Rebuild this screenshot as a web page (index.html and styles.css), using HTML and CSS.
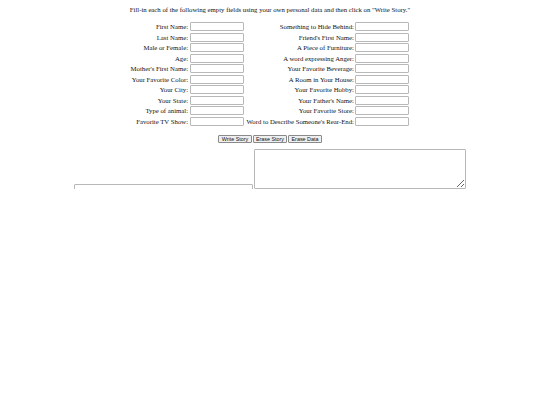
FILE: index.html
```html
<!DOCTYPE html>
<html>
<head>
<meta charset="utf-8">
<link rel="stylesheet" href="styles.css">
</head>
<body>
<p class="intro">Fill-in each of the following empty fields using your own personal data and then click on "Write Story."</p>
<div class="form">
  <label>First Name:</label><input class="field"><label>Something to Hide Behind:</label><input class="field">
  <label>Last Name:</label><input class="field"><label>Friend's First Name:</label><input class="field">
  <label>Male or Female:</label><input class="field"><label>A Piece of Furniture:</label><input class="field">
  <label>Age:</label><input class="field"><label>A word expressing Anger:</label><input class="field">
  <label>Mother's First Name:</label><input class="field"><label>Your Favorite Beverage:</label><input class="field">
  <label>Your Favorite Color:</label><input class="field"><label>A Room in Your House:</label><input class="field">
  <label>Your City:</label><input class="field"><label>Your Favorite Hobby:</label><input class="field">
  <label>Your State:</label><input class="field"><label>Your Father's Name:</label><input class="field">
  <label>Type of animal:</label><input class="field"><label>Your Favorite Store:</label><input class="field">
  <label>Favorite TV Show:</label><input class="field"><label>Word to Describe Someone's Rear-End:</label><input class="field">
</div>
<div class="buttons">
  <button class="btn">Write Story</button><button class="btn">Erase Story</button><button class="btn">Erase Data</button>
</div>
<div class="output">
  <input class="title-field"><textarea class="story"></textarea>
</div>
</body>
</html>
```
FILE: styles.css
```css
html, body {
  margin: 0;
  padding: 0;
  background: #fff;
}
body {
  font-family: "Liberation Serif", "Times New Roman", serif;
  font-size: 6.75px;
  color: #111;
}
.intro {
  margin: 0;
  padding-top: 6px;
  height: 10px;
  line-height: 7px;
  text-align: center;
}
.form {
  display: grid;
  grid-template-columns: auto auto auto auto;
  justify-content: center;
  align-items: center;
  row-gap: 1.5px;
  margin-top: 6px;
}
.form label {
  text-align: right;
  line-height: 9px;
  padding-right: 1.5px;
}
.form label:nth-child(4n+3) {
  padding-left: 3px;
}
.field {
  box-sizing: border-box;
  width: 54px;
  height: 9px;
  margin: 0;
  padding: 0;
  border: 1px solid #b8b8b8;
  border-radius: 1px;
  background: #fff;
}
.buttons {
  display: flex;
  justify-content: center;
  gap: 1px;
  margin-top: 9px;
}
.btn {
  box-sizing: border-box;
  width: 34px;
  height: 8px;
  margin: 0;
  padding: 0;
  font-family: "Liberation Sans", Arial, sans-serif;
  font-size: 5.4px;
  line-height: 6px;
  color: #111;
  background: #efefef;
  border: 1px solid #8a8a8a;
  border-radius: 1px;
}
.output {
  display: flex;
  justify-content: center;
  align-items: flex-end;
  margin-top: 6px;
}
.title-field {
  box-sizing: border-box;
  width: 179px;
  height: 8px;
  margin: 0 1px -3px 0;
  padding: 0;
  border: 1px solid #b8b8b8;
  border-radius: 1px;
}
.story {
  box-sizing: border-box;
  width: 212px;
  height: 40px;
  margin: 0;
  padding: 0;
  border: 1px solid #b8b8b8;
  border-radius: 1px;
  resize: both;
}
```
